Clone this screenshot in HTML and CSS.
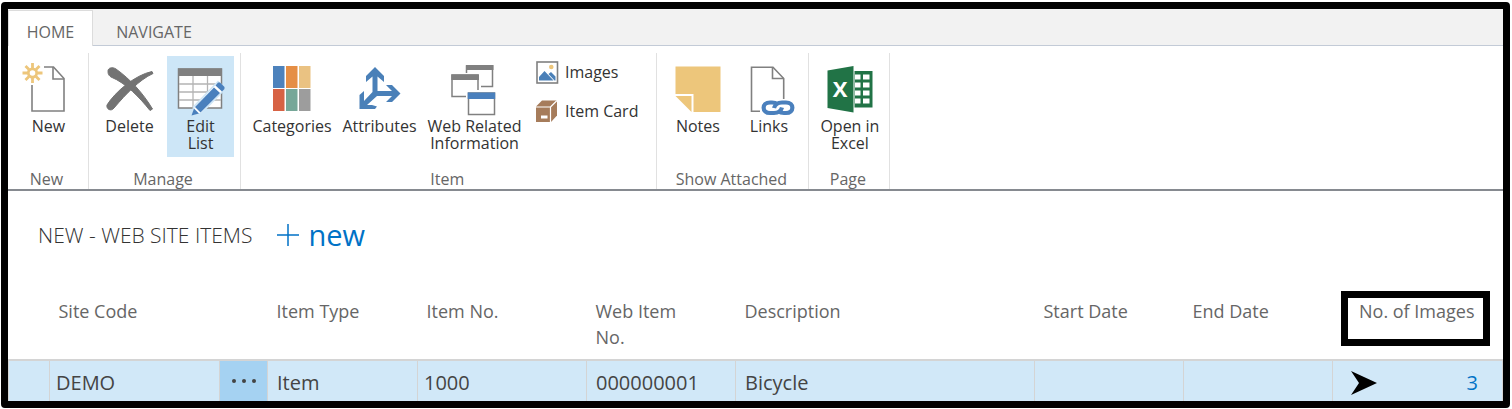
FILE: index.html
```html
<!DOCTYPE html>
<html lang="en">
<head>
<meta charset="utf-8">
<title>New - Web Site Items</title>
<link rel="stylesheet" href="styles.css">
</head>
<body>
<div class="frame">
  <nav class="tabs">
    <button class="tab tab-active" type="button">HOME</button>
    <button class="tab" type="button">NAVIGATE</button>
  </nav>

  <div class="ribbon">
    <section class="group">
      <div class="tools">
        <button class="tool" type="button">
          <svg class="icon" viewBox="22 62 53 54" aria-hidden="true">
            <g fill="none" stroke="#808080" stroke-width="1.6">
              <path d="M44 67H53.5L64 78.5V111H32V85"/>
              <path d="M53 67V79H64"/>
            </g>
            <g stroke="#edc67b" stroke-width="2.8" fill="none">
              <circle cx="32.5" cy="73" r="4.2"/>
              <path d="M32.5 63V68M32.5 78V83M22.5 73H27.500M37.500 73H42.500M25.500 66L29 69.500M36 76.500L39.500 80M39.500 66L36 69.500M29 76.500L25.500 80"/>
            </g>
          </svg>
          <span>New</span>
        </button>
      </div>
      <h2 class="group-name">New</h2>
    </section>

    <section class="group">
      <div class="tools">
        <button class="tool" type="button">
          <svg class="icon" viewBox="104 62 53 54" aria-hidden="true">
            <g fill="#737373" stroke="#737373" stroke-width="1">
              <path d="M109 71C109 68 113 66.500 117 69C131 79 144 93 153.500 109L151 110.500C141 98 127 83 112 77C109 75 109 73 109 71Z"/>
              <path d="M153 71.500L154 73.500C140 80 127 94 115 108C112 112 107 109 108 105C116 92 136 75 153 71.500Z"/>
            </g>
          </svg>
          <span>Delete</span>
        </button>
        <button class="tool tool-on" type="button">
          <svg class="icon" viewBox="175 62 53 54" aria-hidden="true">
            <rect x="179.500" y="69" width="43" height="39" fill="#fff" stroke="#808080" stroke-width="1.500"/>
            <path d="M179 68.500H223V76H179Z" fill="#808080"/>
            <path d="M194 76V108M208.500 76V108M180 84H222M180 92H222M180 100H222" stroke="#b4b4b4" stroke-width="1.300"/>
            <path d="M192 116L195 106.500L219 81.500L226.500 88.500L202 113.500Z" fill="#fff" stroke="#cde6f7" stroke-width="1.500"/>
            <g fill="#4a80bd">
              <path d="M192.500 115.500L195 108.500L200 113.500Z"/>
              <path d="M196 107L215 87.500L221 93L201.500 112.500Z"/>
              <path d="M216.500 85.500L219 82.500H221L225.500 87V89L223 91.500Z"/>
            </g>
          </svg>
          <span>Edit<br>List</span>
        </button>
      </div>
      <h2 class="group-name">Manage</h2>
    </section>

    <section class="group">
      <div class="tools tools-item">
        <button class="tool tool-categories" type="button">
          <svg class="icon" viewBox="266 62 53 54" aria-hidden="true">
            <rect x="273" y="66" width="11.500" height="22" fill="#4d82bc"/>
            <rect x="286" y="66" width="11.500" height="22" fill="#e58e45"/>
            <rect x="299" y="66" width="11.500" height="22" fill="#eac282"/>
            <rect x="273" y="89" width="11.500" height="22" fill="#d76244"/>
            <rect x="286" y="89" width="11.500" height="22" fill="#76a798"/>
            <rect x="299" y="89" width="11.500" height="22" fill="#9d9d9d"/>
          </svg>
          <span>Categories</span>
        </button>
        <button class="tool tool-attributes" type="button">
          <svg class="icon" viewBox="354 62 53 54" aria-hidden="true">
            <g fill="#4a80b8">
              <path d="M376 67L385 76V82L378.500 76.500V91H393L387 85H393L401.500 93.500L393 102H387L393 96H378L368 105H373L378 106.500L376 109H360.500V95L365 91V101L373.500 92V76.500L367 82V76Z"/>
            </g>
          </svg>
          <span>Attributes</span>
        </button>
        <button class="tool tool-web" type="button">
          <svg class="icon" viewBox="449 62 53 54" aria-hidden="true">
            <g fill="#fff" stroke="#808080" stroke-width="1.500">
              <path d="M467.500 73V66H493.500V86.500H482"/>
              <path d="M479 90V75H453V96.500H467"/>
              <rect x="469.500" y="93" width="26" height="21.500"/>
            </g>
            <path d="M467 65H494.500V70H467ZM452.300 74.500H480V80H452.300Z" fill="#808080"/>
            <path d="M468.700 92.500H496.200V99H468.700Z" fill="#4a80bd"/>
          </svg>
          <span>Web Related<br>Information</span>
        </button>
        <div class="small-tools">
          <button class="small-tool" type="button">
            <svg class="small-icon" viewBox="536 60 23 23" aria-hidden="true">
              <rect x="537" y="61" width="20.500" height="21" fill="#fff" stroke="#808080" stroke-width="1.600"/>
              <circle cx="551.300" cy="66" r="2.300" fill="#edc67b"/>
              <path d="M539 79.500V76L544.500 70L553.500 79.500ZM548.500 73L551 71L555.500 75.500V79.500H554.500Z" fill="#4a80b8"/>
            </svg>
            <span>Images</span>
          </button>
          <button class="small-tool" type="button">
            <svg class="small-icon" viewBox="536 98 23 23" aria-hidden="true">
              <path d="M536 104.500L542 98.500H557V113.500L551 120H536Z" fill="#a67c5b"/>
              <path d="M536 105H550.500V120M550.500 105L557 98.500" fill="none" stroke="#fff" stroke-width="1.200"/>
              <rect x="541" y="113.500" width="6.500" height="3" fill="#fff"/>
            </svg>
            <span>Item Card</span>
          </button>
        </div>
      </div>
      <h2 class="group-name">Item</h2>
    </section>

    <section class="group">
      <div class="tools">
        <button class="tool" type="button">
          <svg class="icon" viewBox="670 62 53 54" aria-hidden="true">
            <path d="M674.500 66.500H719.500V112H692.500V94H674.500Z" fill="#edc67b"/>
            <path d="M674.500 96H690.500V112Z" fill="#edc67b"/>
          </svg>
          <span>Notes</span>
        </button>
        <button class="tool" type="button">
          <svg class="icon" viewBox="741 62 53 54" aria-hidden="true">
            <g fill="none" stroke="#808080" stroke-width="1.600">
              <path d="M759 111.300H750.500V67.300H772L782.700 78.500V99"/>
              <path d="M771.500 67V78.500H783"/>
            </g>
            <g fill="none" stroke="#4a80bd" stroke-width="4.200">
              <path d="M776 104C774.500 102.500 773 102.500 771 102.500H769C760.500 102.500 760.500 113 769 113H773C778 113 780 111 781 107.500"/>
              <path d="M778 111.500C779.500 113 781 113 783 113H785C793.500 113 793.500 102.500 785 102.500H781C776 102.500 774 104.500 773 108"/>
            </g>
          </svg>
          <span>Links</span>
        </button>
      </div>
      <h2 class="group-name">Show Attached</h2>
    </section>

    <section class="group">
      <div class="tools">
        <button class="tool" type="button">
          <svg class="icon" viewBox="822 62 53 54" aria-hidden="true">
            <path d="M826.500 70.500L852.500 66V112.500L826.500 108Z" fill="#217346"/>
            <path d="M853.500 71H871.500V107.500H853.500Z" fill="#217346"/>
            <path d="M854 74.500h5.500v5h-5.500zM862 74.500h6.500v5h-6.500zM854 82.500h5.500v5h-5.500zM862 82.500h6.500v5h-6.500zM854 90.500h5.500v5h-5.500zM862 90.500h6.500v5h-6.500zM854 98.500h5.500v5h-5.500zM862 98.500h6.500v5h-6.500z" fill="#fff"/>
            <text class="excel-mark" x="839" y="97" text-anchor="middle">X</text>
          </svg>
          <span>Open in<br>Excel</span>
        </button>
      </div>
      <h2 class="group-name">Page</h2>
    </section>
  </div>

  <header class="caption">
    <h1 class="title">NEW - WEB SITE ITEMS</h1>
    <button class="add" type="button">
      <svg class="plus" viewBox="0 0 24 24" aria-hidden="true"><path d="M12 1V23M1 12H23" stroke="#0072c6" stroke-width="1.500"/></svg>
      <span>new</span>
    </button>
  </header>

  <table class="list">
    <colgroup>
      <col class="c-mark"><col class="c-site"><col class="c-more"><col class="c-type"><col class="c-item"><col class="c-web"><col><col class="c-date"><col class="c-date"><col class="c-images">
    </colgroup>
    <thead>
      <tr>
        <th></th>
        <th>Site Code</th>
        <th></th>
        <th>Item Type</th>
        <th>Item No.</th>
        <th>Web Item<br>No.</th>
        <th>Description</th>
        <th>Start Date</th>
        <th>End Date</th>
        <th class="images-head">No. of Images</th>
      </tr>
    </thead>
    <tbody>
      <tr>
        <td></td>
        <td class="edge">DEMO</td>
        <td class="more-cell"><button class="more" type="button" aria-label="More options"><svg class="dots" viewBox="0 0 26 6" aria-hidden="true"><g fill="#444"><circle cx="3" cy="3" r="2"/><circle cx="13" cy="3" r="2"/><circle cx="23" cy="3" r="2"/></g></svg></button></td>
        <td>Item</td>
        <td class="edge">1000</td>
        <td>000000001</td>
        <td>Bicycle</td>
        <td></td>
        <td></td>
        <td class="images-cell">
          <div class="images-value">
            <svg class="arrow" viewBox="0 0 26 24" aria-hidden="true"><path d="M0 0L26 12L0 24L8 12Z"/></svg>
            <a class="count" href="#">3</a>
          </div>
        </td>
      </tr>
    </tbody>
  </table>
</div>
</body>
</html>
```
FILE: styles.css
```css
*,
*::after {
  box-sizing: border-box;
}

body {
  margin: 2px 2px 2px 1px;
  background: #fff;
  color: #333;
  font-family: "Open Sans", "Noto Sans", sans-serif;
  font-size: 16px;
}

button {
  margin: 0;
  padding: 0;
  border: 0;
  background: none;
  color: inherit;
  font: inherit;
}

.frame {
  border: 7px solid #000;
  border-radius: 4px;
}

.tabs {
  display: flex;
  height: 37px;
  padding-top: 1px;
  background: #f2f2f2;
  box-shadow: inset 0 -1px #c3cbd7;
}

.tab {
  width: 122px;
  padding-top: 7px;
  color: #666;
  line-height: 28px;
}

.tab-active {
  width: 85px;
  padding-top: 6px;
  border: 1px solid #dcdcdc;
  border-bottom: 0;
  background: #fff;
}

.ribbon {
  display: flex;
  height: 145px;
  padding-top: 7px;
  border-bottom: 2px solid #868a90;
}

.group {
  display: flex;
  flex-direction: column;
  justify-content: space-between;
  padding: 3px 6px 0 7px;
  border-right: 1px solid #e1e1e1;
}

.tools {
  display: flex;
  gap: 4px;
}

.tools-item {
  gap: 0;
}

.tool {
  display: flex;
  flex-direction: column;
  align-items: center;
  gap: 2px;
  width: 67px;
  height: 101px;
  padding-top: 6px;
  line-height: 17px;
  white-space: nowrap;
}

.tool-on {
  background: #cde6f7;
}

.tool-categories {
  width: 88px;
}

.tool-attributes {
  width: 87px;
}

.tool-web {
  width: 103px;
}

.icon {
  flex: none;
  width: 53px;
  height: 54px;
}

.excel-mark {
  fill: #fff;
  font-size: 22px;
  font-weight: 700;
}

.small-tools {
  display: flex;
  flex-direction: column;
  gap: 15px;
  padding: 4px 12px 0 10px;
}

.small-tool {
  display: flex;
  align-items: center;
  gap: 6px;
  height: 24px;
  line-height: 24px;
  white-space: nowrap;
}

.small-icon {
  width: 23px;
  height: 23px;
}

.group-name {
  margin: 0;
  padding-right: 4px;
  color: #666;
  font-size: 16px;
  font-weight: 400;
  line-height: 20px;
  text-align: center;
  white-space: nowrap;
}

.caption {
  display: flex;
  align-items: center;
  gap: 24px;
  height: 87px;
  padding-left: 30px;
}

.title {
  margin: 0;
  font-size: 21px;
  font-weight: 300;
}

.add {
  display: flex;
  align-items: center;
  gap: 8px;
  color: #0072c6;
  font-size: 29px;
  line-height: 36px;
}

.plus {
  width: 24px;
  height: 24px;
}

.list {
  width: 100%;
  border-collapse: collapse;
  table-layout: fixed;
}

.c-mark { width: 41px; }
.c-site { width: 170px; }
.c-more { width: 48px; }
.c-type { width: 150px; }
.c-item { width: 169px; }
.c-web { width: 149px; }
.c-date { width: 149px; }
.c-images { width: 170px; }

.list th {
  height: 82px;
  padding: 20px 9px 0;
  color: #666;
  font-size: 18px;
  font-weight: 400;
  line-height: 26px;
  text-align: left;
  vertical-align: top;
}

.list .images-head {
  position: relative;
  padding-right: 28px;
  text-align: right;
  white-space: nowrap;
}

.images-head::after {
  position: absolute;
  top: 13px;
  right: 13px;
  width: 149px;
  height: 55px;
  border: 7px solid #000;
  content: "";
}

.list td {
  height: 41px;
  padding: 4px 9px 0;
  border: 1px solid #d4d4d4;
  border-width: 2px 1px 0;
  background: #d1e8f8;
  color: #444;
  font-size: 20px;
  line-height: 28px;
}

.list .edge {
  padding-left: 6px;
}

.list .more-cell {
  padding: 0;
  background: #a5d2f2;
}

.more {
  display: flex;
  align-items: center;
  justify-content: center;
  width: 100%;
  height: 38px;
}

.dots {
  width: 26px;
  height: 6px;
}

.list .images-cell {
  padding: 4px 24px 0 18px;
}

.images-value {
  display: flex;
  align-items: center;
  justify-content: space-between;
}

.arrow {
  width: 26px;
  height: 24px;
}

.count {
  color: #0072c6;
  text-decoration: none;
}
```
